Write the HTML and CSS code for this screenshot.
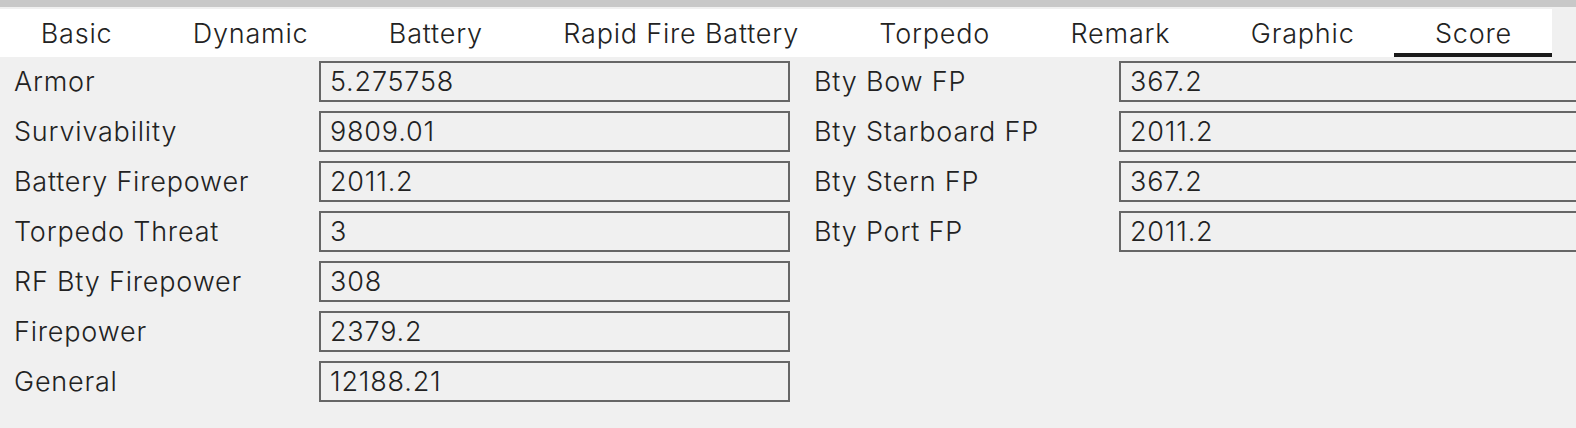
FILE: index.html
```html
<!DOCTYPE html>
<html>
<head>
<meta charset="utf-8">
<link rel="stylesheet" href="styles.css">
</head>
<body>
<div class="topbar"></div>
<div class="tabs">
  <div class="tab">Basic</div>
  <div class="tab">Dynamic</div>
  <div class="tab">Battery</div>
  <div class="tab">Rapid Fire Battery</div>
  <div class="tab">Torpedo</div>
  <div class="tab">Remark</div>
  <div class="tab">Graphic</div>
  <div class="tab active">Score</div>
</div>
<div class="content">
  <div class="col">
    <div class="row"><span class="label">Armor</span><div class="box">5.275758</div></div>
    <div class="row"><span class="label">Survivability</span><div class="box">9809.01</div></div>
    <div class="row"><span class="label">Battery Firepower</span><div class="box">2011.2</div></div>
    <div class="row"><span class="label">Torpedo Threat</span><div class="box">3</div></div>
    <div class="row"><span class="label">RF Bty Firepower</span><div class="box">308</div></div>
    <div class="row"><span class="label">Firepower</span><div class="box">2379.2</div></div>
    <div class="row"><span class="label">General</span><div class="box">12188.21</div></div>
  </div>
  <div class="col">
    <div class="row"><span class="label">Bty Bow FP</span><div class="box">367.2</div></div>
    <div class="row"><span class="label">Bty Starboard FP</span><div class="box">2011.2</div></div>
    <div class="row"><span class="label">Bty Stern FP</span><div class="box">367.2</div></div>
    <div class="row"><span class="label">Bty Port FP</span><div class="box">2011.2</div></div>
  </div>
</div>
</body>
</html>
```
FILE: styles.css
```css
html, body {
  margin: 0;
  padding: 0;
  background: #f0f0f0;
  overflow: hidden;
  width: 1576px;
  height: 428px;
}
body {
  font-family: Inter, "Liberation Sans", sans-serif;
  font-size: 27px;
  font-weight: 350;
  letter-spacing: 0.8px;
  color: #222222;
}
.topbar {
  height: 7px;
  background: #c8c8c8;
  margin-bottom: 2px;
}
.tabs {
  display: inline-flex;
  background: #ffffff;
  height: 48px;
  vertical-align: top;
}
.tab {
  padding: 4px 39.7px 0 40.7px;
  display: flex;
  align-items: center;
  justify-content: center;
  line-height: 1;
  box-sizing: border-box;
  border-bottom: 4px solid transparent;
}
.tab.active {
  border-bottom-color: #1a1a1a;
}
.content {
  display: flex;
  gap: 24px;
  padding: 4px 0 0 14px;
  width: max-content;
}
.col {
  display: flex;
  flex-direction: column;
  gap: 9px;
  width: 776px;
}
.row {
  display: flex;
  align-items: center;
  height: 41px;
}
.label {
  width: 305px;
  flex: none;
}
.box {
  width: 471px;
  height: 41px;
  box-sizing: border-box;
  border: 2px solid #666666;
  padding: 0 9px;
  display: flex;
  align-items: center;
  flex: none;
}
```
